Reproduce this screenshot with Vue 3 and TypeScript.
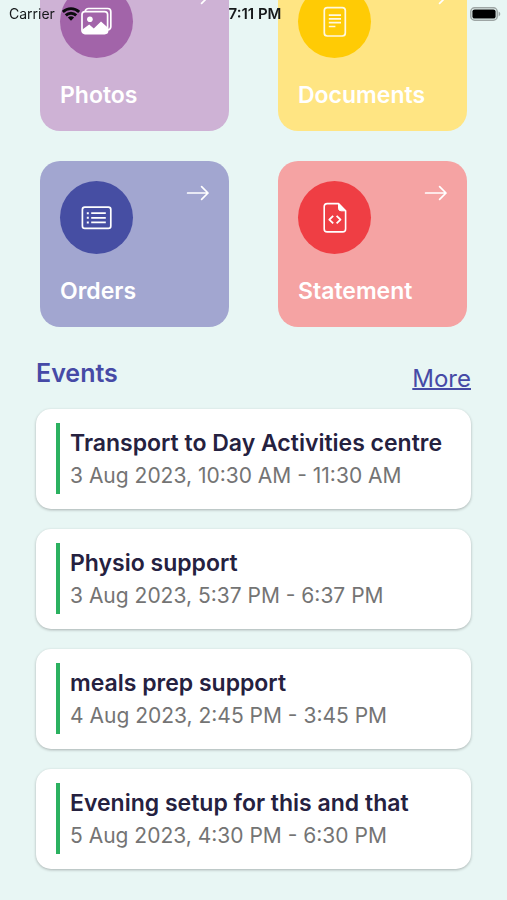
<script setup lang="ts">
type IconName = 'photos' | 'document' | 'list' | 'code'

interface Tile {
  label: string
  icon: IconName
  tone: string
}

interface CareEvent {
  title: string
  time: string
}

const tiles: Tile[] = [
  { label: 'Photos', icon: 'photos', tone: 'purple' },
  { label: 'Documents', icon: 'document', tone: 'yellow' },
  { label: 'Orders', icon: 'list', tone: 'blue' },
  { label: 'Statement', icon: 'code', tone: 'red' },
]

const events: CareEvent[] = [
  { title: 'Transport to Day Activities centre', time: '3 Aug 2023, 10:30 AM - 11:30 AM' },
  { title: 'Physio support', time: '3 Aug 2023, 5:37 PM - 6:37 PM' },
  { title: 'meals prep support', time: '4 Aug 2023, 2:45 PM - 3:45 PM' },
  { title: 'Evening setup for this and that', time: '5 Aug 2023, 4:30 PM - 6:30 PM' },
]
</script>

<template>
  <div class="screen">
    <header class="status">
      <div class="carrier">
        <span>Carrier</span>
        <svg width="18" height="14" viewBox="0 0 18 14" aria-hidden="true">
          <g fill="none" stroke="#0b0b0d" stroke-width="2.9">
            <path d="M0.8 4.9a11.8 11.8 0 0 1 16.4 0" />
            <path d="M3.8 8.4a7.4 7.4 0 0 1 10.4 0" />
          </g>
          <path d="M5.9 10.5a4.4 4.4 0 0 1 6.2 0L9 13.7z" fill="#0b0b0d" />
        </svg>
      </div>
      <span class="clock">7:11 PM</span>
      <svg class="battery" width="31" height="14" viewBox="0 0 31 14" aria-hidden="true">
        <rect x="0.8" y="0.8" width="26.4" height="12.4" rx="3.8" fill="none" stroke="#9da5a4" stroke-width="1.5" />
        <rect x="2.4" y="2.4" width="23.2" height="9.2" rx="2.2" fill="#000" />
        <path d="M28.6 4.6c2.2.8 2.2 4 0 4.8z" fill="#9da5a4" />
      </svg>
    </header>

    <main>
      <nav class="tiles">
        <a v-for="tile in tiles" :key="tile.label" href="#" class="tile" :class="tile.tone">
          <span class="tile-top">
            <span class="disc">
              <svg v-if="tile.icon === 'photos'" width="32" height="32" viewBox="0 0 32 32" fill="none" stroke="#fff" stroke-width="1.7" stroke-linejoin="round">
                <path d="M4.2 5.4Q4.6 2.5 7.6 2.5H26.6Q29.8 2.5 29.8 5.7V20.5Q29.8 23.3 27 23.8" />
                <rect x="1" y="5.6" width="25.6" height="22" rx="3" />
                <circle cx="8.9" cy="13.2" r="2.8" fill="#fff" stroke="none" />
                <path d="M1.4 23.6 8.2 18.6 12.8 22.6 20 15.6 26.4 21.2V25Q26.4 27.4 23.6 27.4H4.2Q1.4 27.4 1.4 25z" fill="#fff" stroke="none" />
              </svg>
              <svg v-else-if="tile.icon === 'document'" width="32" height="32" viewBox="0 0 32 32" fill="none" stroke="#fff8e0" stroke-width="1.7">
                <rect x="5.3" y="1.6" width="21" height="28.4" rx="3" />
                <path d="M9.8 9.1H22M9.8 12.9H22M9.8 16.7H22M9.8 20.5H16.4" />
              </svg>
              <svg v-else-if="tile.icon === 'list'" width="32" height="32" viewBox="0 0 32 32" fill="none" stroke="#fff">
                <rect x="1.4" y="5.2" width="28.4" height="21.2" rx="2.4" stroke-width="1.7" />
                <path d="M10.2 11.2H24.8M10.2 15.8H24.8M10.2 20.4H24.8" stroke-width="1.8" />
                <path d="M5.8 11.2H7.8M5.8 15.8H7.8M5.8 20.4H7.8" stroke-width="2" />
              </svg>
              <svg v-else width="32" height="32" viewBox="0 0 32 32" fill="none" stroke="#fff" stroke-width="1.6" stroke-linejoin="round">
                <path d="M19.5 1.6H8.2Q5.2 1.6 5.2 4.6V26.9Q5.2 29.9 8.2 29.9H23.6Q26.6 29.9 26.6 26.9V8.8z" />
                <path d="M19.5 1.7V6.2Q19.5 8.8 22.1 8.8H26.6z" fill="#fff" stroke-width="1" />
                <path d="m14.2 13.8-3.9 3.8 3.9 3.8M17.6 13.8l3.9 3.8-3.9 3.8" stroke-width="1.8" />
              </svg>
            </span>
            <svg class="arrow" width="24" height="16" viewBox="0 0 24 16" fill="none" stroke="#fff" stroke-width="1.7" stroke-linecap="round" stroke-linejoin="round" aria-hidden="true">
              <path d="M1.6 8H22M15.6 1.6 22 8l-6.4 6.4" />
            </svg>
          </span>
          <span class="tile-label">{{ tile.label }}</span>
        </a>
      </nav>

      <section class="events">
        <div class="events-head">
          <h2>Events</h2>
          <a href="#" class="more">More</a>
        </div>
        <ul>
          <li v-for="event in events" :key="event.title" class="event">
            <h3>{{ event.title }}</h3>
            <p>{{ event.time }}</p>
          </li>
        </ul>
      </section>
    </main>
  </div>
</template>

<style>
body {
  margin: 0;
  background: #e8f6f4;
}
</style>

<style scoped>
.screen {
  min-height: 100vh;
  overflow: hidden;
  box-sizing: border-box;
  background: #e8f6f4;
  font-family: Inter, "Liberation Sans", sans-serif;
}

.status {
  position: fixed;
  z-index: 1;
  top: 0;
  left: 0;
  right: 0;
  display: grid;
  grid-template-columns: 1fr auto 1fr;
  align-items: center;
  height: 27px;
  padding: 0 6px 0 9px;
  color: #16191b;
  font-size: 14px;
}

.carrier {
  display: flex;
  align-items: center;
  gap: 7px;
}

.clock {
  font-size: 15px;
  font-weight: 600;
}

.battery {
  justify-self: end;
}

/* The list is scrolled: the first row of tiles runs under the status bar. */
.tiles {
  display: grid;
  grid-template-columns: 1fr 1fr;
  gap: 30px 49px;
  margin-top: -35px;
  padding: 0 40px;
}

.tile {
  display: flex;
  flex-direction: column;
  gap: 20px;
  height: 166px;
  box-sizing: border-box;
  padding: 20px 19px 19px 20px;
  border-radius: 20px;
  color: #fff;
  text-decoration: none;
}

.tile-top {
  display: flex;
  justify-content: space-between;
  align-items: flex-start;
}

.disc {
  display: grid;
  place-items: center;
  width: 73px;
  height: 73px;
  border-radius: 50%;
}

.arrow {
  margin-top: 4px;
}

.tile-label {
  font-size: 23px;
  line-height: 34px;
  font-weight: 600;
}

.purple { background: #ceb2d5; }
.purple .disc { background: #a264a9; }
.yellow { background: #ffe583; }
.yellow .disc { background: #ffcb05; }
.blue { background: #a2a6d0; }
.blue .disc { background: #464ea3; }
.red { background: #f5a3a3; }
.red .disc { background: #ef3e44; }

.events {
  padding: 28px 36px 32px;
}

.events-head {
  display: flex;
  justify-content: space-between;
  align-items: flex-start;
  color: #464aa6;
}

h2 {
  margin: 0;
  font-size: 25px;
  line-height: 36px;
  font-weight: 600;
}

.more {
  padding-top: 6px;
  color: inherit;
  font-size: 24px;
  line-height: 36px;
  text-decoration-thickness: 2px;
}

ul {
  display: grid;
  gap: 20px;
  margin: 12px 0 0;
  padding: 0;
  list-style: none;
}

.event {
  display: grid;
  grid-template-columns: 4px 1fr;
  column-gap: 10px;
  padding: 14px 20px 15px;
  border-radius: 15px;
  background: #fff;
  box-shadow: 0 1px 3px rgba(0, 0, 0, 0.28);
}

.event::before {
  content: "";
  grid-row: 1 / 3;
  background: #2bb160;
}

h3,
p {
  grid-column: 2;
  margin: 0;
  white-space: nowrap;
}

h3 {
  padding-top: 3px;
  color: #25213f;
  font-size: 23px;
  line-height: 34px;
  font-weight: 600;
}

p {
  padding-bottom: 2px;
  color: #747474;
  font-size: 21px;
  line-height: 32px;
}
</style>
